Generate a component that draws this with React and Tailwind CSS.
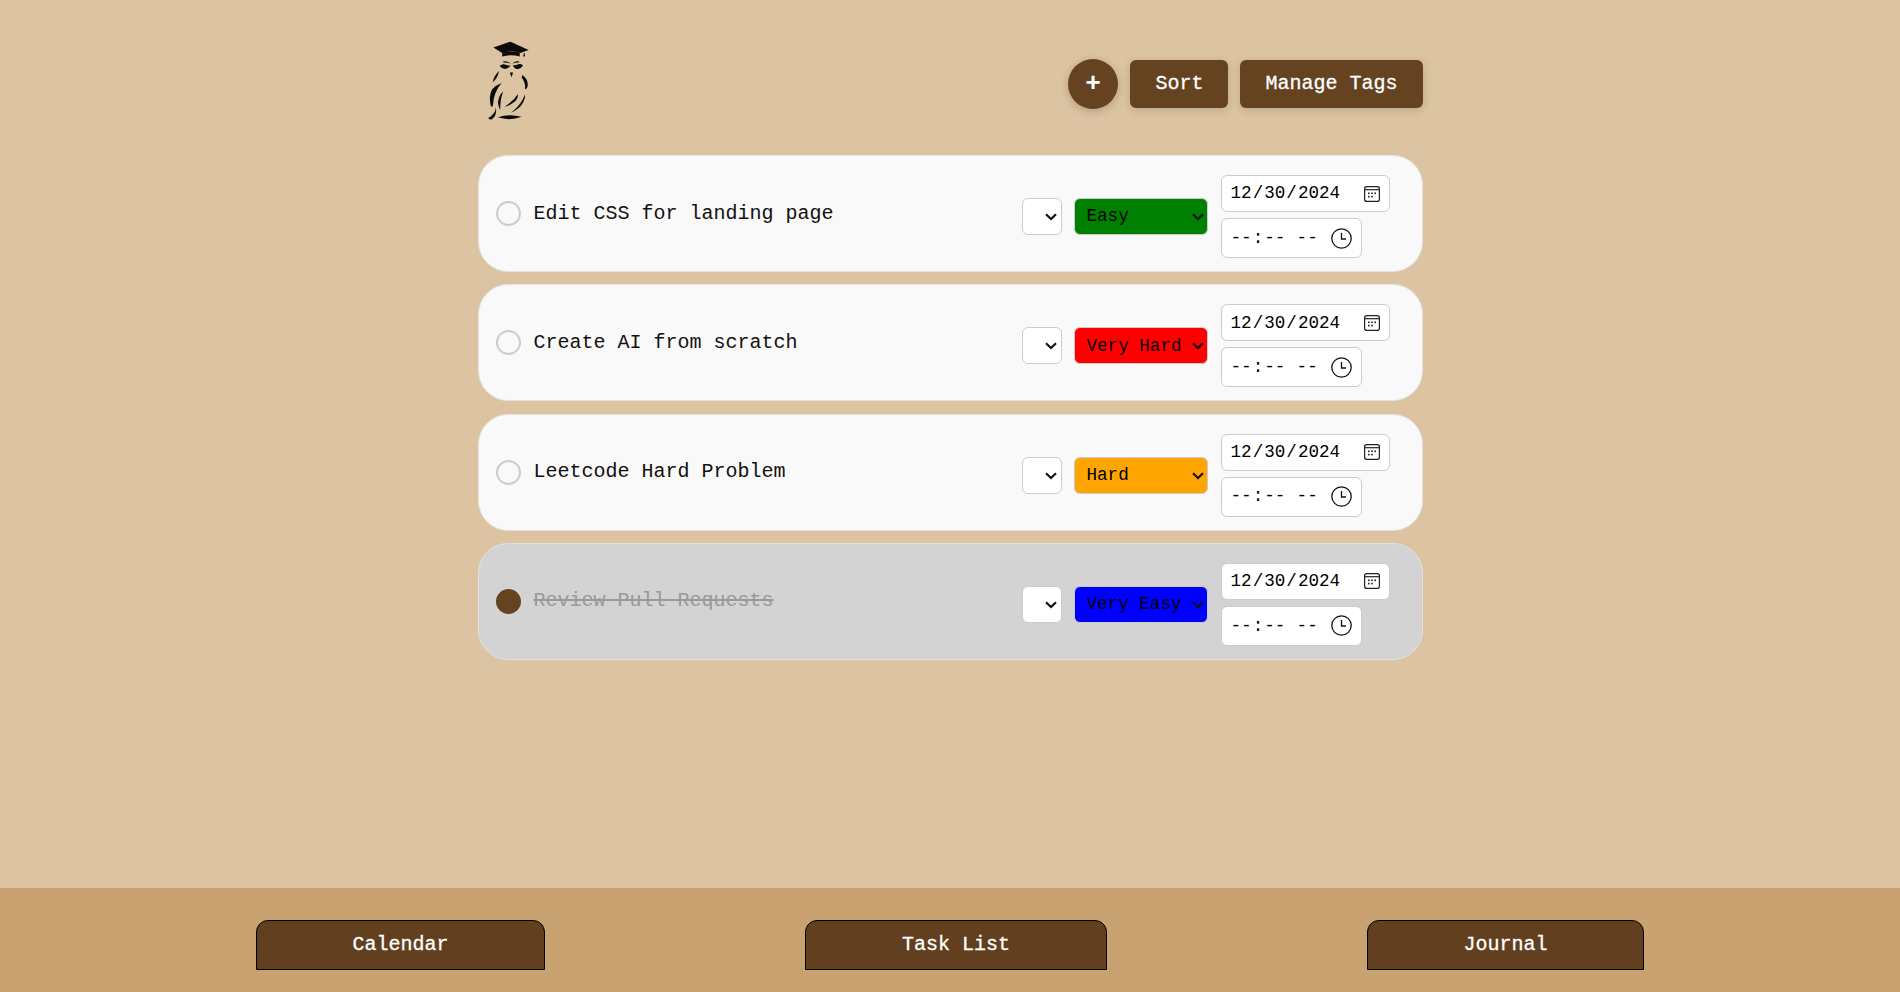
import React from 'react';

const tasks = [
  { id: 1, title: 'Edit CSS for landing page', level: 'Easy', color: 'bg-[#008000]' },
  { id: 2, title: 'Create AI from scratch', level: 'Very Hard', color: 'bg-[#ff0000]' },
  { id: 3, title: 'Leetcode Hard Problem', level: 'Hard', color: 'bg-[#ffa500]' },
  { id: 4, title: 'Review Pull Requests', level: 'Very Easy', color: 'bg-[#0000ff]', done: true },
];

const levels = ['Very Easy', 'Easy', 'Medium', 'Hard', 'Very Hard'];

function OwlLogo() {
  return (
    <svg width="41" height="80" viewBox="54 46 124 240" fill="#0b0b0b" aria-label="Owl logo">
      {/* cap */}
      <path d="M70 65 L122 47 L177 72 L152 81 Q124 72 97 81 Z" />
      <path d="M97 80 L97 92 Q124 84 150 92 L150 80 Q124 73 97 80 Z" />
      <path d="M162 82 L165 82 L166 92 L161 92 Z" />
      {/* eyes, beak */}
      <path d="M89 121 Q98 112 108 117 Q116 120 122 118 Q116 130 105 130 Q96 129 89 121 Z" />
      <path d="M160 119 Q152 112 143 116 Q135 120 129 118 Q134 130 145 130 Q154 128 160 119 Z" />
      <path d="M100 107 Q114 105 124 114 Q113 109 100 110 Z" />
      <path d="M148 107 Q136 105 127 114 Q137 109 148 110 Z" />
      <path d="M120 140 L130 140 L125 155 Z" />
      {/* left wing */}
      <path d="M87 136 Q84 158 68 170 Q72 150 87 136 Z" />
      <path d="M95 172 Q78 178 66 192 Q56 212 62 240 Q68 252 70 232 Q72 200 95 172 Z" />
      <path d="M100 198 Q86 210 84 232 Q86 246 91 254 Q90 224 100 198 Z" />
      <path d="M78 246 Q76 266 55 278 Q56 284 66 282 Q82 270 78 246 Z" />
      {/* right side */}
      <path d="M158 148 Q176 160 174 182 Q170 194 166 190 Q168 170 156 156 Z" />
      <path d="M144 206 Q132 226 104 244 Q122 240 138 226 Q146 216 144 206 Z" />
      <path d="M166 206 Q156 236 124 262 Q150 250 160 232 Q168 218 166 206 Z" />
      <path d="M84 276 Q116 264 156 274 Q120 288 84 276 Z" />
    </svg>
  );
}

function Chevron({ className }) {
  return (
    <svg
      width="12"
      height="8"
      viewBox="0 0 12 8"
      fill="none"
      stroke="#111111"
      strokeWidth="2.2"
      className={`absolute top-[15px] pointer-events-none ${className}`}
    >
      <path d="M1 1.2 L6 6 L11 1.2" />
    </svg>
  );
}

function CalendarIcon() {
  return (
    <svg width="16" height="16" viewBox="0 0 16 16" fill="none" stroke="#222222" strokeWidth="1.2" className="shrink-0">
      <rect x="0.6" y="0.6" width="14.8" height="14.8" rx="2.2" />
      <path d="M0.6 3.7 H15.4" />
      <g fill="#222222" stroke="none">
        <rect x="4" y="6.5" width="1.6" height="1.6" />
        <rect x="7.2" y="6.5" width="1.6" height="1.6" />
        <rect x="10.4" y="6.5" width="1.6" height="1.6" />
        <rect x="4" y="9.8" width="1.6" height="1.6" />
        <rect x="7.2" y="9.8" width="1.6" height="1.6" />
      </g>
    </svg>
  );
}

function ClockIcon() {
  return (
    <svg width="21" height="21" viewBox="0 0 21 21" fill="none" stroke="#111111" strokeWidth="1.3" className="shrink-0">
      <circle cx="10.5" cy="10.5" r="9.7" />
      <path d="M10.5 5 V11 H15" />
    </svg>
  );
}

function TaskCard({ task }) {
  return (
    <div
      className={`flex items-center h-[117px] pl-[17px] rounded-[30px] border border-[#e2e2e2] ${
        task.done ? 'bg-[#d3d3d3]' : 'bg-[#f9f9f9]'
      }`}
    >
      <span
        className={`w-[25px] h-[25px] shrink-0 rounded-full ${
          task.done ? 'bg-[#654321]' : 'border-2 border-[#cccccc]'
        }`}
      />
      <span
        className={`ml-[13px] flex-1 text-[20px] ${
          task.done ? 'line-through text-[#999999]' : 'text-[#111111]'
        }`}
      >
        {task.title}
      </span>

      <div className="flex items-start gap-[12px] mt-[6px]">
        <div className="relative">
          <select className="block appearance-none w-[40px] h-[37px] rounded-md border border-[#cccccc] bg-white text-[17.6px]">
            <option value=""></option>
          </select>
          <Chevron className="right-[5px]" />
        </div>
        <div className="relative">
          <select
            defaultValue={task.level}
            className={`block appearance-none w-[134px] h-[37px] pl-3 rounded-md border border-[#cccccc] text-[17.6px] text-black ${task.color}`}
          >
            {levels.map((l) => (
              <option key={l}>{l}</option>
            ))}
          </select>
          <Chevron className="right-[4px]" />
        </div>
      </div>

      <div className="flex flex-col items-start gap-[6px] mt-[6px] ml-[13px] mr-[32px] w-[169px]">
        <div className="flex items-center w-[169px] h-[37px] pl-[8px] pr-[9px] rounded-md border border-[#cccccc] bg-white">
          <input
            type="date"
            defaultValue="2024-12-30"
            className="flex-1 min-w-0 text-[17.6px] text-black outline-none [&::-webkit-calendar-picker-indicator]:hidden"
          />
          <CalendarIcon />
        </div>
        <div className="flex items-center w-[141px] h-[40px] pl-[8px] pr-[9px] rounded-md border border-[#cccccc] bg-white">
          <input
            type="time"
            className="flex-1 min-w-0 text-[17.6px] text-black outline-none [&::-webkit-calendar-picker-indicator]:hidden [&::-webkit-datetime-edit-ampm-field]:pl-[5px]"
          />
          <ClockIcon />
        </div>
      </div>
    </div>
  );
}

export default function App() {
  return (
    <div className="min-h-screen flex flex-col bg-[#dcc3a1] font-['Liberation_Mono',monospace]">
      <main className="flex-1 w-[945px] mx-auto pt-[41px]">
        {/* Header */}
        <header className="flex items-center justify-between h-[80px] mb-[34px] pl-[10px]">
          <OwlLogo />
          <div className="flex items-center gap-[12px] mt-[6px]">
            <button className="w-[50px] h-[50px] rounded-full bg-[#654321] text-white text-[26px] font-bold leading-none pr-[1px] shadow-[0_2px_8px_rgba(0,0,0,0.2)]">
              +
            </button>
            <button className="h-[48px] px-[25px] rounded-md bg-[#654321] text-white text-[20px] [-webkit-text-stroke:0.3px_white] shadow-[0_2px_8px_rgba(0,0,0,0.15)]">
              Sort
            </button>
            <button className="h-[48px] px-[25px] rounded-md bg-[#654321] text-white text-[20px] [-webkit-text-stroke:0.3px_white] shadow-[0_2px_8px_rgba(0,0,0,0.15)]">
              Manage Tags
            </button>
          </div>
        </header>

        {/* Tasks */}
        <div className="flex flex-col gap-[12.33px]">
          {tasks.map((t) => (
            <TaskCard key={t.id} task={t} />
          ))}
        </div>
      </main>

      {/* Footer nav */}
      <footer className="h-[104px] shrink-0 flex items-start justify-between px-64 pt-[32px] bg-[#c8a270]">
        {['Calendar', 'Task List', 'Journal'].map((label) => (
          <button
            key={label}
            className="h-[50px] px-[95.5px] rounded-t-xl border border-black bg-[#623f1f] text-white text-[20px] [-webkit-text-stroke:0.3px_white]"
          >
            {label}
          </button>
        ))}
      </footer>
    </div>
  );
}
